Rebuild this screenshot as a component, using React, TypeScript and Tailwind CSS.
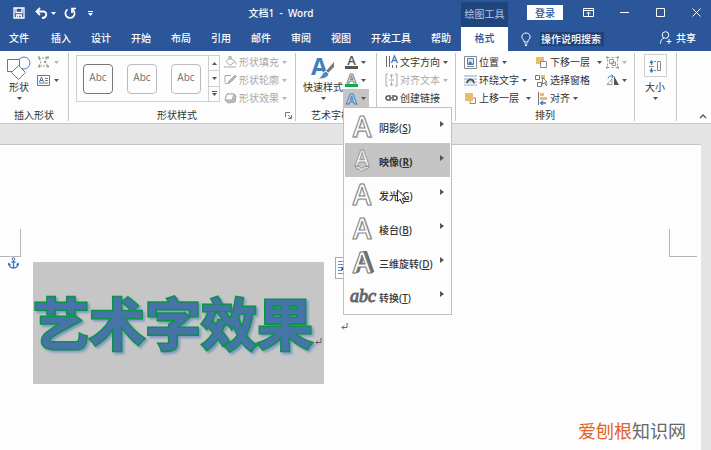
import type { ReactNode } from "react"
import clsx from "clsx"

const tabs = ["插入", "设计", "开始", "布局", "引用", "邮件", "审阅", "视图", "开发工具", "帮助"]

const effects = [
  { label: "阴影", hotkey: "S", icon: "shadow" },
  { label: "映像", hotkey: "R", icon: "reflection" },
  { label: "发光", hotkey: "G", icon: "glow" },
  { label: "棱台", hotkey: "B", icon: "bevel" },
  { label: "三维旋转", hotkey: "D", icon: "rotate" },
  { label: "转换", hotkey: "T", icon: "transform" },
]

const effectStyles: Record<string, string> = {
  shadow: "text-[28px] text-white [-webkit-text-stroke:1px_#858585] [text-shadow:1px_1px_1px_#bbb]",
  reflection: "text-[22px] text-white [-webkit-text-stroke:1px_#9a9a9a]",
  glow: "text-[28px] text-white [-webkit-text-stroke:1px_#858585] [text-shadow:0_0_2px_#aaa]",
  bevel: "text-[28px] text-white [-webkit-text-stroke:1px_#858585] [text-shadow:1px_0_0_#999]",
  rotate: "text-[28px] text-white [-webkit-text-stroke:1px_#777] [text-shadow:1px_0_0_#6d6d6d,2px_0_0_#6d6d6d,3px_-1px_0_#6d6d6d]",
}

function Caret({ className = "text-[#555]" }: { className?: string }) {
  return (
    <svg viewBox="0 0 5 3" className={clsx("h-[3px] w-[5px] shrink-0", className)} fill="currentColor" aria-hidden="true">
      <path d="M0 0h5L2.500 3z" />
    </svg>
  )
}

function Icon({ children, className = "h-[14px] w-[14px]", box = "0 0 14 14" }: { children: ReactNode; className?: string; box?: string }) {
  return (
    <svg viewBox={box} className={clsx("shrink-0", className)} fill="none" stroke="currentColor" aria-hidden="true">
      {children}
    </svg>
  )
}

function Group({ label, className, children, launcher }: { label?: string; className: string; children: ReactNode; launcher?: boolean }) {
  return (
    <section className={clsx("flex h-[68px] shrink-0 flex-col border-r border-[#c6c6c6]", className)}>
      <div className="flex h-[57px] items-start">{children}</div>
      <div className="flex h-3 items-center">
        <h2 className="flex-1 text-center whitespace-nowrap">{label}</h2>
        {launcher && (
          <button aria-label="设置形状格式" className="mr-[3px] text-[#777]">
            <Icon className="h-[7px] w-[7px]" box="0 0 7 7">
              <path d="M.5 5V.5H5M3 3l3 3M6.500 3v3.500H3" />
            </Icon>
          </button>
        )}
      </div>
    </section>
  )
}

function Row({ icon, label, disabled, caret = true, wide }: { icon: ReactNode; label: string; disabled?: boolean; caret?: boolean; wide?: boolean }) {
  return (
    <button disabled={disabled} className={clsx("flex h-[18px] items-center whitespace-nowrap", disabled && "text-[#a9a9a9]")}>
      {icon}
      <span className="ml-[2px]">{label}</span>
      {caret && (
        <span className={clsx("flex", wide ? "ml-[7px]" : "ml-[3px]")}>
          <Caret className={disabled ? "text-[#b5b5b5]" : "text-[#555]"} />
        </span>
      )}
    </button>
  )
}

function EffectIcon({ kind }: { kind: string }) {
  if (kind === "transform") {
    return (
      <span aria-hidden="true" className="w-6 shrink-0 text-center font-['Liberation_Serif',serif] text-[18px] leading-[26px] text-[#666] italic [-webkit-text-stroke:1px_#666]">
        abc
      </span>
    )
  }
  return (
    <span aria-hidden="true" className="flex w-6 shrink-0 flex-col items-center">
      <span className={clsx("font-['Open_Sans',sans-serif] font-semibold", kind === "reflection" ? "leading-[18px]" : "leading-[26px]", effectStyles[kind])}>A</span>
      {kind === "reflection" && (
        <Icon className="h-[6px] w-4" box="0 0 16 6">
          <path d="M1 .5h4.500c1 2 4 2 5 0H15l-1.500 2.500H11c-1 3-5 3-6 0H2.500z" fill="#ddd" stroke="#999" />
        </Icon>
      )}
    </span>
  )
}

function EffectsMenu() {
  return (
    <div role="menu" className="absolute top-full left-0 z-20 w-[109px] border border-[#c0c0c0] bg-[#fdfdfd] p-px">
      {effects.map((e) => (
        <button
          key={e.icon}
          role="menuitem"
          className={clsx("relative flex h-[34px] w-full items-center pr-[6px] pl-[5px]", e.icon === "reflection" && "bg-[#c5c5c5]")}
        >
          <EffectIcon kind={e.icon} />
          <span className={clsx("ml-[5px] flex-1 pt-[3px] text-left whitespace-nowrap", e.icon === "reflection" ? "font-bold" : "font-medium")}>
            {e.label}(<u>{e.hotkey}</u>)
          </span>
          <svg viewBox="0 0 4 6" className="mb-1 h-[6px] w-1" fill="#555" aria-hidden="true">
            <path d="M0 0l4 3-4 3z" />
          </svg>
          {e.icon === "glow" && (
            <svg viewBox="0 0 10 16" className="absolute top-3 left-[52px] h-4 w-[10px]" aria-hidden="true">
              <path d="M.5 1v11.500l2.700-2.500 2 4.700 2-.9-2-4.500h3.900z" fill="#fff" stroke="#333" />
            </svg>
          )}
        </button>
      ))}
    </div>
  )
}

function TitleBar() {
  return (
    <div className="flex h-[27px] items-stretch">
      <div className="flex w-[461px] shrink-0 items-center pb-px">
        <div className="flex w-[181px] items-center pl-[13px]">
          <button aria-label="保存">
            <Icon className="h-3 w-3" box="0 0 12 12">
              <path d="M1 1h10v10H1zM3 1v4.500h6V1M3.500 11V8h5v3M5.500 8v3" strokeWidth="1.300" />
            </Icon>
          </button>
          <button aria-label="撤消" className="ml-[10px]">
            <Icon className="h-3 w-[13px]" box="0 0 13 12">
              <path d="M5 1L1.500 4.500 5 8M2 4.500h6c5 0 4 6.500-1 6.500" strokeWidth="1.800" />
            </Icon>
          </button>
          <span className="ml-[3px] flex"><Caret className="text-white" /></span>
          <button aria-label="重复" className="ml-2">
            <Icon className="h-3 w-3" box="0 0 12 12">
              <path d="M3.500 2.500a4.600 4.600 0 1 0 5 0M8 6V1.500h4" strokeWidth="1.700" />
            </Icon>
          </button>
          <button aria-label="自定义快速访问工具栏" className="ml-3 flex flex-col items-center gap-px">
            <span className="h-px w-[5px] bg-white" />
            <Caret className="text-white" />
          </button>
        </div>
        <h1 className="flex-1 pr-20 text-center font-medium">文档1&nbsp; -&nbsp; Word</h1>
      </div>
      <div className="mt-[2px] flex w-[47px] shrink-0 items-center justify-center bg-[#20457c] pb-[2px] text-[#b4c6e2]">绘图工具</div>
      <button className="mt-[5px] ml-[19px] h-[15px] w-9 shrink-0 bg-white font-medium text-[#2b579a]">登录</button>
      <div className="ml-auto flex items-center pr-[10px] pb-[2px]">
        <button aria-label="功能区显示选项">
          <Icon className="h-[10px] w-[11px]" box="0 0 11 10">
            <path d="M.5.5h10v8H.5zM.5 2.500h10M5.500 8V4M3.500 6l2-2 2 2" />
          </Icon>
        </button>
        <button aria-label="最小化" className="ml-[26px]">
          <Icon className="h-[9px] w-[9px]" box="0 0 9 9"><path d="M0 4.500h9" /></Icon>
        </button>
        <button aria-label="最大化" className="ml-[27px]">
          <Icon className="h-[9px] w-[9px]" box="0 0 9 9"><path d="M.5.5h8v8h-8z" /></Icon>
        </button>
        <button aria-label="关闭" className="ml-[27px]">
          <Icon className="h-[9px] w-[9px]" box="0 0 9 9"><path d="M.5.5l8 8M8.500.5l-8 8" /></Icon>
        </button>
      </div>
    </div>
  )
}

function TabBar() {
  return (
    <div className="flex h-6 items-stretch">
      <nav className="flex w-[461px] shrink-0 pb-[3px] font-medium">
        <button className="w-[42px] pl-[9px] text-left">文件</button>
        {tabs.map((t) => (
          <button key={t} className="px-[10px] whitespace-nowrap">{t}</button>
        ))}
      </nav>
      <button className="w-[47px] shrink-0 bg-white pb-[3px] font-medium text-[#2b579a]">格式</button>
      <div className="ml-[13px] flex items-center pb-px">
        <label htmlFor="tell-me" aria-label="搜索">
          <Icon className="h-[14px] w-[10px]" box="0 0 10 14">
            <path d="M3 10V8.500C-.5 6 .5 1 5 1s5.500 5 2 7.500V10zM3.500 12h3M4 13.500h2" />
          </Icon>
        </label>
        <input id="tell-me" defaultValue="操作说明搜索" className="ml-[9px] h-[14px] w-16 bg-[#1f4479] px-px font-medium outline-none" />
      </div>
      <button className="mr-[15px] ml-auto flex items-center gap-1 pb-[3px] font-medium">
        <Icon className="h-[13px] w-3" box="0 0 12 13">
          <circle cx="5.500" cy="4" r="3.300" />
          <path d="M.5 12.500C.5 9.500 2 7.500 4 7M9 8v5M6.500 10.500h5" />
        </Icon>
        共享
      </button>
    </div>
  )
}

function ShapesGroup() {
  return (
    <Group label="插入形状" className="w-[69px]">
      <button className="mt-[3px] ml-[7px] flex w-6 flex-col items-center">
        <Icon className="h-6 w-6 text-[#4a7ebb]" box="0 0 24 24">
          <circle cx="17" cy="7" r="6" />
          <path d="M.5 3.500h12v12H.5z" fill="#fff" />
          <path d="M11.500 9.500l7 7-7 7-7-7z" fill="#fff" />
        </Icon>
        <span className="mt-px whitespace-nowrap">形状</span>
        <span className="mt-1 flex"><Caret /></span>
      </button>
      <div className="ml-[6px] flex flex-col text-[#777]">
        <button disabled aria-label="编辑形状" className="flex h-[18px] items-center gap-1 text-[#999]">
          <Icon className="h-3 w-[13px]" box="0 0 13 12">
            <path d="M2 2.500L10 1.500 8 6l3 4H2l2-4z" strokeDasharray="2 1" />
            <path d="M1 1.500h2M9 1.500h3M1 10.500h2M10 10.500h2M7 6h2" strokeWidth="2" />
          </Icon>
          <Caret className="text-[#b5b5b5]" />
        </button>
        <button aria-label="文本框" className="flex h-[18px] items-center gap-1">
          <Icon className="h-[11px] w-[13px]" box="0 0 13 11">
            <path d="M.5.5h12v10H.5zM8 3.500h3M8 5.500h3M2 8h9" />
            <path d="M2.500 7l2-5 2 5M3 5.500h3" stroke="#3b78c3" />
          </Icon>
          <Caret />
        </button>
      </div>
    </Group>
  )
}

function StylesGroup() {
  return (
    <Group label="形状样式" className="w-[227px]" launcher>
      <div className="mt-[2px] ml-[7px] flex h-[47px] w-36 border border-[#cfcfcf]">
        <div className="flex flex-1 items-center justify-between pr-[7px] pl-[6px] text-[#777]">
          <button className="h-[30px] w-[30px] rounded-[4px] border border-[#777] pb-[3px]">Abc</button>
          <button className="h-[30px] w-[30px] rounded-[4px] border border-[#bbb] pb-[3px]">Abc</button>
          <button className="h-[30px] w-[30px] rounded-[4px] border border-[#bbb] pb-[3px]">Abc</button>
        </div>
        <div className="flex w-[11px] flex-col divide-y divide-[#cfcfcf] border-l border-[#cfcfcf]">
          <button aria-label="上一行" className="flex flex-1 items-center justify-center">
            <span className="flex rotate-180"><Caret /></span>
          </button>
          <button aria-label="下一行" className="flex flex-1 items-center justify-center"><Caret /></button>
          <button aria-label="其他" className="flex flex-1 flex-col items-center justify-center gap-px">
            <span className="h-px w-[5px] bg-[#555]" />
            <Caret />
          </button>
        </div>
      </div>
      <div className="ml-1 flex flex-col">
        <Row disabled label="形状填充" icon={
          <Icon className="h-3 w-[13px]" box="0 0 13 12">
            <path d="M6 1.500l5 4-5 4-4-4zM5 4V.5h2V4M11 5.500c1 1 1 2 1 3" />
            <path d="M0 11h12" stroke="#d5d5d5" strokeWidth="2" />
          </Icon>
        } />
        <Row disabled label="形状轮廓" icon={
          <Icon className="h-3 w-[13px]" box="0 0 13 12">
            <path d="M7 1.500H1v7M1 9.500h3" />
            <path d="M4 9.500L5 7l6-6 1.500 1.500-6 6z" fill="#bbb" />
          </Icon>
        } />
        <Row disabled label="形状效果" icon={
          <Icon className="h-3 w-[13px]" box="0 0 13 12">
            <path d="M1 8l2-6h7l2 2-1 6-7 1z" fill="#bbb" />
            <path d="M3 2h7L8 8H1z" fill="#fff" />
          </Icon>
        } />
      </div>
    </Group>
  )
}

function WordArtGroup() {
  return (
    <Group label="艺术字样式" className="w-[81px]">
      <button className="mt-[3px] ml-[7px] flex w-10 flex-col items-center">
        <span className="relative flex h-6 w-6" aria-hidden="true">
          <span className="font-['Open_Sans',sans-serif] text-[24px] leading-5 font-bold text-[#3f7fbf]">A</span>
          <Icon className="absolute right-0 bottom-0 h-[18px] w-[18px]" box="0 0 18 18">
            <path d="M17 0v5l-6 6-2-2z" fill="#777" stroke="none" />
            <path d="M9 9l3 3c-2 5-7 5-11 5 4-2 4-7 8-8z" fill="#4a88c7" stroke="#fff" />
          </Icon>
        </span>
        <span className="mt-px whitespace-nowrap">快速样式</span>
        <span className="mt-1 flex"><Caret /></span>
      </button>
      <div className="flex flex-col font-['Open_Sans',sans-serif]">
        <button aria-label="文本填充" className="flex h-[18px] w-[26px] items-center gap-[3px] pl-[2px]">
          <span className="w-[13px] border-b-3 border-[#555] text-[13px] leading-[11px] font-semibold text-[#555]">A</span>
          <Caret />
        </button>
        <button aria-label="文本轮廓" className="flex h-[18px] w-[26px] items-center gap-[3px] pl-[2px]">
          <span className="w-[13px] border-b-3 border-[#0cae4a] text-[13px] leading-[11px] font-bold text-white [-webkit-text-stroke:1px_#888]">A</span>
          <Caret />
        </button>
        <div className="relative">
          <button aria-label="文本效果" aria-expanded="true" className="flex h-[18px] w-[26px] items-center gap-[3px] bg-[#c5c5c5] pl-[2px]">
            <span className="w-[13px] text-[15px] leading-[14px] font-bold text-[#dce8f5] [-webkit-text-stroke:1px_#3f7fbf]">A</span>
            <Caret />
          </button>
          <div className="font-['Noto_Sans','Noto_Sans_CJK_SC',sans-serif]">
            <EffectsMenu />
          </div>
        </div>
      </div>
    </Group>
  )
}

function TextGroup() {
  return (
    <Group className="w-[79px]">
      <div className="ml-2 flex flex-col">
        <Row label="文字方向" icon={
          <Icon className="h-[14px] w-[13px]" box="0 0 13 14">
            <path d="M1.500 1v11M4.500 1v11M7.500 10v3M11.500 10v3" stroke="#666" />
            <path d="M6.500 8l3-7 3 7M7.500 5.500h4" stroke="#3f7fbf" strokeWidth="1.300" />
          </Icon>
        } />
        <Row disabled label="对齐文本" icon={
          <Icon className="h-[14px] w-[13px]" box="0 0 13 14">
            <path d="M3 1H1v12h2M10 1h2v12h-2M4 7h5M6.500 1.500v4M6.500 8.500v4M5 3l1.500-1.500L8 3M5 11l1.500 1.500L8 11" />
          </Icon>
        } />
        <Row label="创建链接" caret={false} icon={
          <Icon className="h-[14px] w-[13px]" box="0 0 13 14">
            <path d="M6 5H3a2 2 0 0 0 0 4h3M7 5h3a2 2 0 0 1 0 4H7M4 7h5" stroke="#555" strokeWidth="1.500" />
          </Icon>
        } />
      </div>
    </Group>
  )
}

function ArrangeGroup() {
  return (
    <Group label="排列" className="w-[179px]">
      <div className="ml-2 flex w-[71px] flex-col">
        <Row label="位置" icon={
          <Icon className="h-[13px] w-[13px]" box="0 0 13 13">
            <path d="M.5.5h12v12H.5z" stroke="#888" />
            <path d="M3 10.500h7" stroke="#888" />
            <path d="M3.500 2.500h6v6h-6z" fill="#d6e5f5" stroke="#4a82bd" />
            <path d="M4 8l2-3 3 3z" fill="#3f7fbf" stroke="none" />
          </Icon>
        } />
        <Row label="环绕文字" icon={
          <Icon className="h-[13px] w-[13px]" box="0 0 13 13">
            <path d="M0 2h13M0 5h13M0 8h13M0 11h13" stroke="#7fa8d6" />
            <path d="M1.500 10C2 2 11 2 11.500 10H9C8.500 6 4.500 6 4 10z" fill="#555" stroke="#fff" />
          </Icon>
        } />
        <Row label="上移一层" wide icon={
          <Icon className="h-[13px] w-[13px]" box="0 0 13 13">
            <path d="M6 6h5.500v5.500H6z" stroke="#888" />
            <path d="M1 1h8v8H1z" fill="#eebb6c" stroke="none" />
          </Icon>
        } />
      </div>
      <div className="flex w-[71px] flex-col">
        <Row label="下移一层" wide icon={
          <Icon className="h-[13px] w-[13px]" box="0 0 13 13">
            <path d="M1 1h8v7H1z" fill="#eebb6c" stroke="none" />
            <path d="M5.500 5.500h6v6h-6z" fill="#fff" stroke="#888" />
          </Icon>
        } />
        <Row label="选择窗格" caret={false} icon={
          <Icon className="h-[13px] w-[13px]" box="0 0 13 13">
            <path d="M.5 1.500h4v4h-4zM2.500 8.500h4v4h-4z" stroke="#777" />
            <path d="M6 1h4v4H6z" fill="#eebb6c" stroke="none" />
            <path d="M7.500 3.500v7l2-2 1.500 3 1-.5-1.500-3H12z" fill="#fff" stroke="#666" strokeWidth=".8" />
          </Icon>
        } />
        <Row label="对齐" icon={
          <Icon className="h-[13px] w-[13px]" box="0 0 13 13">
            <path d="M3.500 0v13" stroke="#777" />
            <path d="M5 1h4v3H5zM5 5h7v3H5z" fill="#eebb6c" stroke="none" />
            <path d="M11 11H5.500M8 9l-2.500 2L8 13" stroke="#3f7fbf" strokeWidth="1.300" />
          </Icon>
        } />
      </div>
      <div className="flex flex-col">
        <button disabled aria-label="组合" className="flex h-[18px] items-center gap-[3px] text-[#999]">
          <Icon className="h-[13px] w-[13px]" box="0 0 13 13">
            <path d="M1.500 1.500h10v10h-10z" strokeDasharray="2 2" />
            <path d="M3.500 3.500h4v4h-4zM6 6h3.500v3.500H6z" />
            <path d="M0 1.500h2M11 1.500h2M0 11.500h2M11 11.500h2" strokeWidth="2" />
          </Icon>
          <Caret className="text-[#b5b5b5]" />
        </button>
        <button aria-label="旋转" className="flex h-[18px] items-center gap-[3px]">
          <Icon className="h-[13px] w-[13px]" box="0 0 13 13">
            <path d="M8 2v9h5z" fill="#555" stroke="none" />
            <path d="M6 5v5.500H1z" stroke="#999" />
            <path d="M2 4.500C2.500 2 4.500 1.500 7 2.500M5.500.5l2 2-2 1.500" stroke="#3f7fbf" />
          </Icon>
          <Caret />
        </button>
      </div>
    </Group>
  )
}

function SizeGroup() {
  return (
    <Group className="w-[42px]">
      <button className="mt-px ml-2 flex w-6 flex-col items-center">
        <span className="flex h-[23px] w-[23px] items-center justify-center border border-[#cfcfcf]">
          <Icon>
            <path d="M9.500 2.500h3v9h-3z" stroke="#888" />
            <path d="M1 7.500h5M8 2.500H6M8 11.500H6" stroke="#888" />
            <path d="M3.500 2v4M3.500 9v4M2 4l1.500-2L5 4M2 11l1.500 2L5 11" stroke="#3f7fbf" strokeWidth="1.300" />
          </Icon>
        </span>
        <span className="mt-1 whitespace-nowrap">大小</span>
        <span className="mt-1 flex"><Caret /></span>
      </button>
    </Group>
  )
}

function ParagraphMark() {
  return (
    <Icon className="h-[7px] w-[7px] text-[#555]" box="0 0 7 7">
      <path d="M6 0v4.500H1M3 2.500l-2 2 2 2" strokeWidth=".9" />
    </Icon>
  )
}

function Page() {
  return (
    <main className="flex flex-1 flex-col bg-[#e4e4e4] pt-5 pr-[10px]">
      <div className="flex flex-1 flex-col border-t border-[#c4c4c4] bg-[#fdfdfd]">
        {/* Margin corners */}
        <div className="mt-[84px] flex justify-between pr-1">
          <div className="h-7 w-[21px] border-r border-b border-[#b5b5b5]" />
          <div className="h-7 w-7 border-b border-l border-[#b5b5b5]" />
        </div>

        <div className="flex items-start">
          <div className="flex w-[33px] shrink-0 pl-2">
            <Icon className="h-3 w-[11px] text-[#3f75b5]" box="0 0 11 12">
              <circle cx="5.500" cy="2" r="1.300" />
              <path d="M5.500 3.500V11M3.500 5h4M1 6.500C1 9.500 3 11 5.500 11S10 9.500 10 6.500M0 8l1-1.500L2.500 8M8.500 8L10 6.500 11 8" strokeWidth="1.300" />
            </Icon>
          </div>
          <div className="mt-[5px] flex h-[122px] w-[291px] shrink-0 items-center bg-[#c6c6c6]">
            <p className="text-[56px] leading-[60px] font-bold whitespace-nowrap text-[#4673a8] [-webkit-text-stroke:3px_#0b9347] [paint-order:stroke_fill] drop-shadow-[2px_2px_1px_#7d97c2]">艺术字效果</p>
            <span className="mt-9 ml-[2px]"><ParagraphMark /></span>
          </div>
          <div className="ml-[11px] flex flex-col items-start">
            <button aria-label="布局选项" className="h-[22px] w-5 border border-[#aaa] pl-[2px]">
              <Icon className="h-4 w-4 text-[#5b8fce]" box="0 0 16 16">
                <path d="M0 1.500h16M0 4.500h5M0 7.500h4M0 10.500h4M0 13.500h16" />
                <path d="M3 10c1-6 9-6 10 0h-3c-1-3-3-3-4 0z" fill="#444" stroke="none" />
              </Icon>
            </button>
            <span className="mt-11 ml-[6px]"><ParagraphMark /></span>
          </div>
        </div>

        <p className="mt-auto mr-[15px] mb-2 self-end text-[18px] leading-[22px] text-[#666]">
          <span className="text-[#e0632a]">爱刨根</span>知识网
        </p>
      </div>
    </main>
  )
}

export default function App() {
  return (
    <div className="flex min-h-screen flex-col overflow-x-hidden bg-white font-['Noto_Sans','Noto_Sans_CJK_SC',sans-serif] text-[10px] leading-3 text-[#333]">
      <header className="bg-[#2b579a] text-white">
        <TitleBar />
        <TabBar />
      </header>
      <div className="flex h-[73px] items-start border-b border-[#c9c9c9] bg-[#fdfdfd] pt-[2px]">
        <ShapesGroup />
        <StylesGroup />
        <WordArtGroup />
        <TextGroup />
        <ArrangeGroup />
        <SizeGroup />
        <button aria-label="折叠功能区" className="mr-1 mb-1 ml-auto self-end text-[#555]">
          <Icon className="h-[5px] w-2" box="0 0 8 5"><path d="M1 4l3-3 3 3" strokeWidth="1.400" /></Icon>
        </button>
      </div>
      <Page />
    </div>
  )
}
